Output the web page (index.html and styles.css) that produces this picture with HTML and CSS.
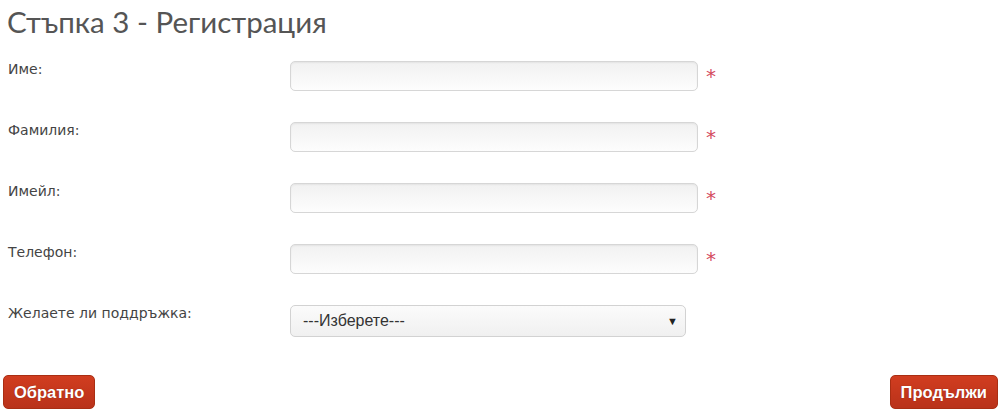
FILE: index.html
```html
<!DOCTYPE html>
<html lang="bg">
<head>
<meta charset="utf-8">
<title>Стъпка 3 - Регистрация</title>
<link rel="stylesheet" href="styles.css">
</head>
<body>
<div class="page">
  <h1 class="title">Стъпка 3 - Регистрация</h1>
  <form class="form">
    <div class="row">
      <label class="label">Име:</label>
      <div class="field"><input class="input" type="text"><span class="req">*</span></div>
    </div>
    <div class="row">
      <label class="label">Фамилия:</label>
      <div class="field"><input class="input" type="text"><span class="req">*</span></div>
    </div>
    <div class="row">
      <label class="label">Имейл:</label>
      <div class="field"><input class="input" type="text"><span class="req">*</span></div>
    </div>
    <div class="row">
      <label class="label">Телефон:</label>
      <div class="field"><input class="input" type="text"><span class="req">*</span></div>
    </div>
    <div class="row">
      <label class="label">Желаете ли поддръжка:</label>
      <div class="field">
        <div class="select"><span class="select-text">---Изберете---</span><span class="arrow">▼</span></div>
      </div>
    </div>
  </form>
  <div class="actions">
    <button class="btn" type="button">Обратно</button>
    <button class="btn" type="button">Продължи</button>
  </div>
</div>
</body>
</html>
```
FILE: styles.css
```css
html, body {
  margin: 0;
  padding: 0;
  background: #fff;
}
.page {
  width: 1000px;
  height: 410px;
  position: relative;
  overflow: hidden;
}
.title {
  margin: 0;
  padding: 4px 0 0 7px;
  height: 50px;
  box-sizing: border-box;
  font-family: Lato, "Open Sans", sans-serif;
  font-weight: 400;
  font-size: 29.5px;
  line-height: 36px;
  color: #555;
}
.form {
  display: flex;
  flex-direction: column;
  gap: 31px;
  padding-top: 11px;
}
.row {
  display: flex;
  align-items: flex-start;
  height: 30px;
}
.label {
  width: 282px;
  padding-left: 8px;
  font-family: "DejaVu Sans", Verdana, sans-serif;
  font-size: 14px;
  line-height: 17px;
  color: #444;
}
.field {
  display: flex;
  align-items: flex-start;
  gap: 8px;
}
.input {
  width: 408px;
  height: 30px;
  box-sizing: border-box;
  border: 1px solid #d6d6d6;
  border-radius: 5px;
  background: linear-gradient(#f1f1f1, #fdfdfd);
  box-shadow: inset 0 1px 2px rgba(0,0,0,0.06);
  margin: 0;
}
.req {
  font-family: "DejaVu Sans", sans-serif;
  font-size: 20px;
  font-weight: 400;
  color: #d44a5e;
  line-height: 20px;
  margin-top: 5px;
}
.select {
  width: 396px;
  height: 32px;
  box-sizing: border-box;
  border: 1px solid #d2d2d2;
  border-radius: 5px;
  background: linear-gradient(#fbfbfb, #f0f0f0);
  display: flex;
  align-items: center;
  justify-content: space-between;
  padding: 0 7px 0 12px;
  font-family: "Liberation Sans", Arial, sans-serif;
  font-size: 16px;
  color: #333;
}
.arrow {
  font-size: 11px;
  color: #222;
}
.actions {
  position: absolute;
  left: 3px;
  right: 2px;
  bottom: 1px;
  display: flex;
  justify-content: space-between;
}
.btn {
  height: 34px;
  padding: 0 10px;
  border: 1px solid #a92e13;
  border-radius: 5px;
  background: linear-gradient(#d13d20, #b9321a);
  color: #fff;
  font-family: "Liberation Sans", Arial, sans-serif;
  font-weight: 700;
  font-size: 16.5px;
  text-shadow: 0 0 1px rgba(80,0,0,0.5);
  cursor: pointer;
}
```
